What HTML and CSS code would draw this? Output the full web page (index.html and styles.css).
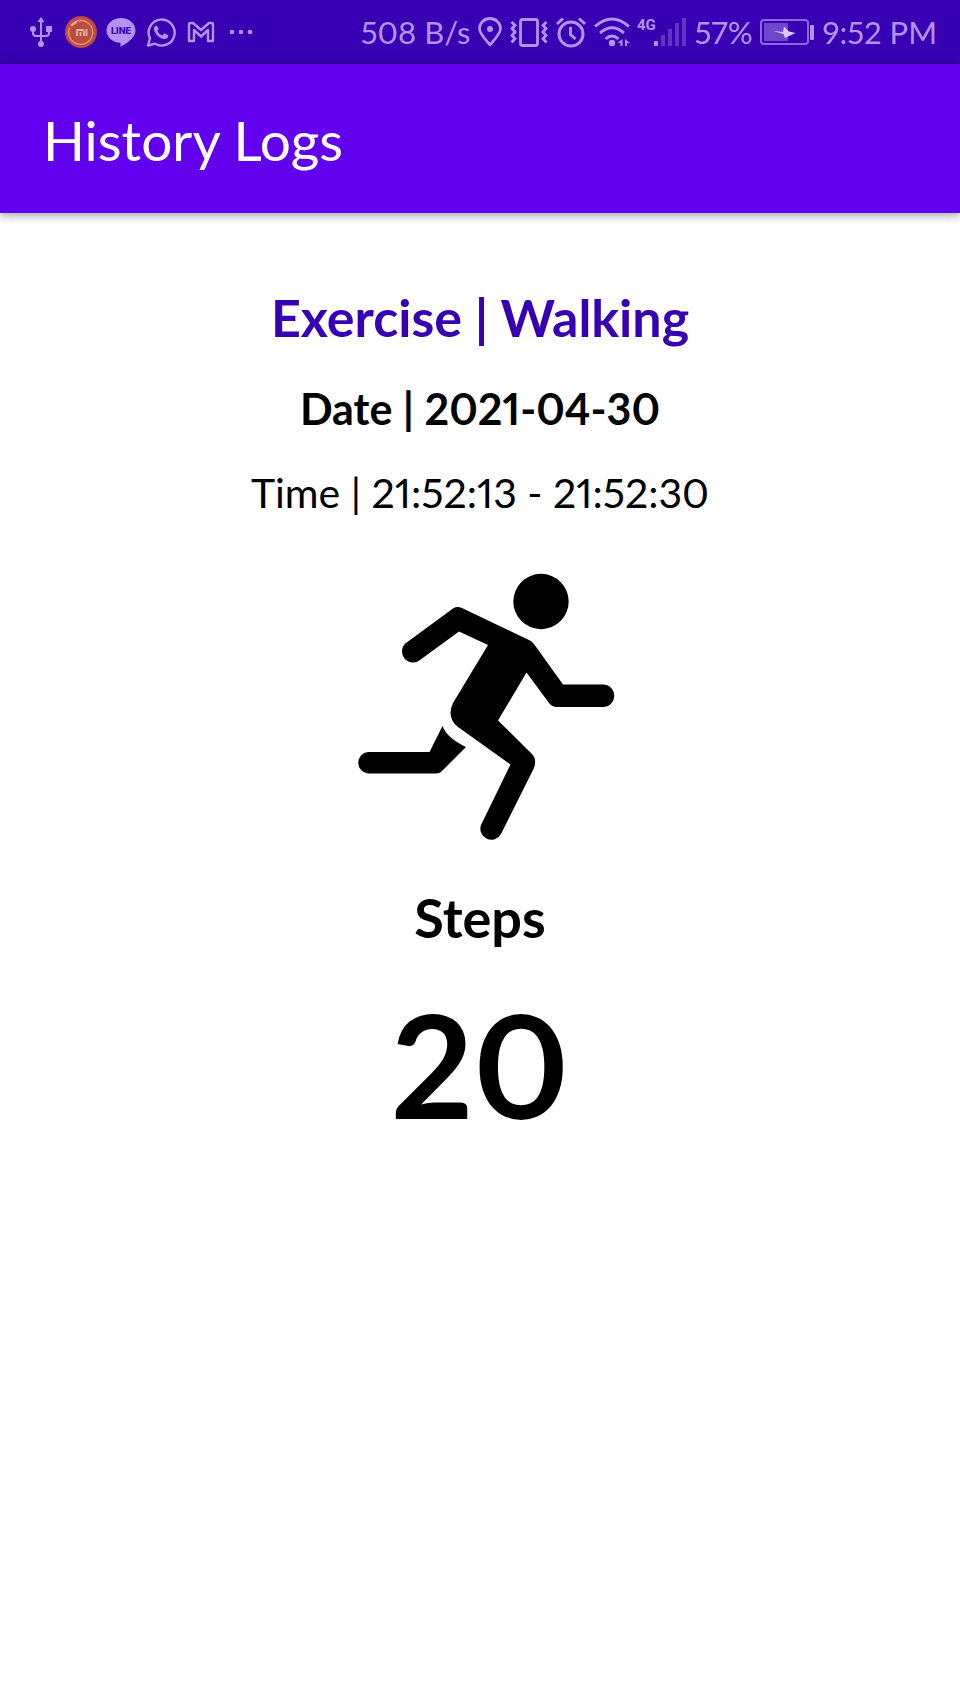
FILE: index.html
```html
<!DOCTYPE html>
<html lang="en">
<head>
<meta charset="utf-8">
<meta name="viewport" content="width=device-width, initial-scale=1">
<title>History Logs</title>
<link rel="stylesheet" href="styles.css">
</head>
<body>
<div class="status-bar">
  <div class="notifications">
    <svg class="icon" viewBox="0 0 32 32" aria-label="USB">
      <g fill="none" stroke="currentColor" stroke-width="2"><path d="M16 5v22M8 14v3q0 3 3 3h10q3 0 3-3v-4"/></g>
      <path fill="currentColor" d="M16 1l3.500 5h-7zM21 10h6v6h-6z"/><circle cx="8" cy="13" r="3" fill="currentColor"/><circle cx="16" cy="28" r="3" fill="currentColor"/>
    </svg>
    <svg class="icon" viewBox="0 0 32 32" aria-label="Mi">
      <circle cx="16" cy="16" r="16" fill="#bd4b3e"/>
      <path d="M12 5a12 12 0 1 1-7.500 7" fill="none" stroke="#d7917c" stroke-width="1.500" stroke-linecap="round"/>
      <path d="M7 9l4-3" stroke="#dda99e" stroke-width="2.500" stroke-linecap="round"/>
      <path d="M12 20v-6h5q2 0 2 2v4M15.500 16v4M21.500 13v7" fill="none" stroke="#e4b6aa" stroke-width="1.800"/>
    </svg>
    <svg class="icon" viewBox="0 0 32 32" aria-label="LINE">
      <path fill="currentColor" d="M16 2c8 0 14.500 5.500 14.500 12.500 0 3-1.500 6-4 8.500-3 3-7.500 6-11.500 8 .8-1.500.8-3 .2-4.200C7.500 26.500 1.500 21 1.500 14.500 1.500 7.500 8 2 16 2z"/>
      <text class="line-label" x="16" y="18" text-anchor="middle">LINE</text>
    </svg>
    <svg class="icon" viewBox="0 0 32 32" aria-label="WhatsApp">
      <path fill="none" stroke="currentColor" stroke-width="2.400" stroke-linejoin="round" d="M3 29.500l2-7.200A13 13 0 1 1 10 27.700z"/>
      <path fill="currentColor" d="M11.500 9.500c-1 0-2.800 1.500-2.500 4 .5 4 6 10 11 9.500 2.500-.3 3.800-2.500 3.200-3.700l-3.700-2-2.200 2.200c-2.300-.7-4.300-2.700-5-4.700l1.600-2z"/>
    </svg>
    <svg class="icon" viewBox="0 0 32 32" aria-label="Gmail">
      <path fill="none" stroke="currentColor" stroke-width="2.400" stroke-linejoin="round" d="M4 25V8.500Q4 7 5.500 7H8l8 7 8-7h2.500Q28 7 28 8.500V25h-5V14l-7 6.500L9 14v11z"/>
    </svg>
    <svg class="icon" viewBox="0 0 32 32" aria-label="More notifications">
      <g fill="currentColor"><circle cx="7" cy="16" r="2.300"/><circle cx="16" cy="16" r="2.300"/><circle cx="25" cy="16" r="2.300"/></g>
    </svg>
  </div>
  <div class="system">
    <span>508 B/s</span>
    <svg class="icon pin" viewBox="0 0 26 32" aria-label="Location">
      <path fill="none" stroke="currentColor" stroke-width="2.800" stroke-linejoin="round" d="M13 29C9 24 2.500 18 2.500 12.500a10.500 10 0 0 1 21 0C23.500 18 17 24 13 29z"/><circle cx="13" cy="13" r="3" fill="currentColor"/>
    </svg>
    <svg class="icon vibrate" viewBox="0 0 38 32" aria-label="Vibrate">
      <rect x="10.500" y="3.500" width="17" height="26" rx="2" fill="none" stroke="currentColor" stroke-width="2.800"/>
      <path fill="none" stroke="currentColor" stroke-width="2.800" d="M1.500 6l3.500 3.300-3 3.200 3 3.500L2 19.500l3 3.300-3.500 3.700M36.500 6l-3.500 3.300 3 3.200-3 3.500 3 3.500-3 3.300 3.500 3.700"/>
    </svg>
    <svg class="icon" viewBox="0 0 32 32" aria-label="Alarm">
      <g fill="none" stroke="currentColor" stroke-width="3"><circle cx="16" cy="18" r="12"/><path d="M2 8l6-5.500M30 8l-6-5.500M15.500 11v7.500l5 4.500"/></g>
    </svg>
    <svg class="icon wifi" viewBox="0 0 36 32" aria-label="Wi-Fi">
      <path fill="none" stroke="currentColor" stroke-width="3" d="M1 10.500q17-15 34 0M6 17q12-10.500 24 0M11.500 23q6.500-6 13 0"/>
      <circle cx="18" cy="27" r="3.200" fill="currentColor"/><path fill="currentColor" d="M28.500 23v7h-2v-3h-3zM31 23l5 4h-3v3h-2z"/>
    </svg>
    <svg class="icon signal" viewBox="0 0 50 32" aria-label="4G signal">
      <text class="network-label" x="0" y="14">4G</text>
      <rect x="17" y="25" width="4" height="5" rx="1" fill="currentColor"/>
      <path stroke="#6035c6" stroke-width="4" d="M26 19v11M33 13v17M40 7v23M47 2v28"/>
    </svg>
    <span>57%</span>
    <svg class="icon battery" viewBox="0 0 56 32" aria-label="Charging">
      <rect x="1" y="4" width="47" height="24" rx="3" fill="none" stroke="#8d68dc" stroke-width="2"/>
      <path fill="#6d48cc" d="M4 7h24v18H4z"/><rect x="50" y="9" width="4" height="15" rx="1" fill="currentColor"/>
      <path fill="#d9c9f8" d="M13 15l10 1 1-5.500 5 5 6.500 1.500L25 22l-1.500-4z"/>
    </svg>
    <time>9:52 PM</time>
  </div>
</div>
<header class="app-bar"><h1>History Logs</h1></header>
<main class="log">
  <h2 class="activity">Exercise | Walking</h2>
  <p class="date">Date | 2021-04-30</p>
  <p class="period">Time | 21:52:13 - 21:52:30</p>
  <svg class="runner" viewBox="0 -9 280 301" aria-label="Running figure">
    <circle cx="201" cy="41.500" r="27.700"/>
    <path d="M113 48.500Q117 46 122 48L188 79.500Q192 81 194 84L223 124.500H263A11 11 0 0 1 263 147H217Q212 147 209 143L186.500 112.500 158 160.500 192 194Q197 199 194 208L161 274A11 11 0 0 1 141 265L170.500 204.500 118 167Q111 162 110.500 153 111 147 113 143L148 85 119 71.500 80 100A11 11 0 0 1 66 83z"/>
    <path d="M102.500 166Q107 178 126 187L103 210Q100 213.500 96 213.500H28A10.800 10.800 0 0 1 28 192H89.500z"/>
  </svg>
  <h2 class="steps-title">Steps</h2>
  <p class="steps-count">20</p>
</main>
</body>
</html>
```
FILE: styles.css
```css
* {
  box-sizing: border-box;
}

body {
  margin: 0;
  background: #fff;
  color: #000;
  font-family: Lato, "Liberation Sans", sans-serif;
  font-variant-numeric: proportional-nums;
}

h1, h2, p {
  margin: 0;
}

.status-bar {
  display: flex;
  justify-content: space-between;
  align-items: center;
  height: 64px;
  padding: 0 23px 0 25px;
  background: #3700b3;
  color: #b393f0;
  font-size: 31px;
  line-height: 32px;
  white-space: nowrap;
}

.notifications, .system {
  display: flex;
  align-items: center;
  gap: 8px;
}

.system {
  gap: 7px;
}

.icon {
  display: block;
  flex: none;
  width: 32px;
  height: 32px;
}

.pin { width: 26px; }
.vibrate { width: 38px; }
.wifi { width: 36px; }
.signal { width: 50px; }
.battery { width: 56px; }

.line-label {
  fill: #3700b3;
  font-family: Inter, sans-serif;
  font-size: 9px;
  font-weight: 800;
}

.network-label {
  fill: currentColor;
  font-family: Roboto, sans-serif;
  font-size: 15px;
  font-weight: 700;
}

.app-bar {
  padding: 44px 43px 41px;
  background: #6200ee;
  color: #fff;
  box-shadow: 0 2px 10px rgba(0, 0, 0, 0.4);
}

.app-bar h1 {
  font-size: 55px;
  font-weight: 400;
  line-height: 64px;
}

.log {
  display: flex;
  flex-direction: column;
  align-items: center;
  gap: 34px;
  padding: 72px 16px;
  text-align: center;
}

.activity {
  color: #3700b3;
  font-size: 52px;
  font-weight: 700;
  line-height: 64px;
}

.date {
  font-size: 43px;
  font-weight: 700;
  line-height: 52px;
}

.period {
  font-size: 41px;
  line-height: 48px;
}

.runner {
  display: block;
  width: 280px;
}

.steps-title {
  font-size: 54px;
  font-weight: 700;
  line-height: 64px;
}

.steps-count {
  font-size: 144px;
  font-weight: 700;
  line-height: 160px;
}
```
